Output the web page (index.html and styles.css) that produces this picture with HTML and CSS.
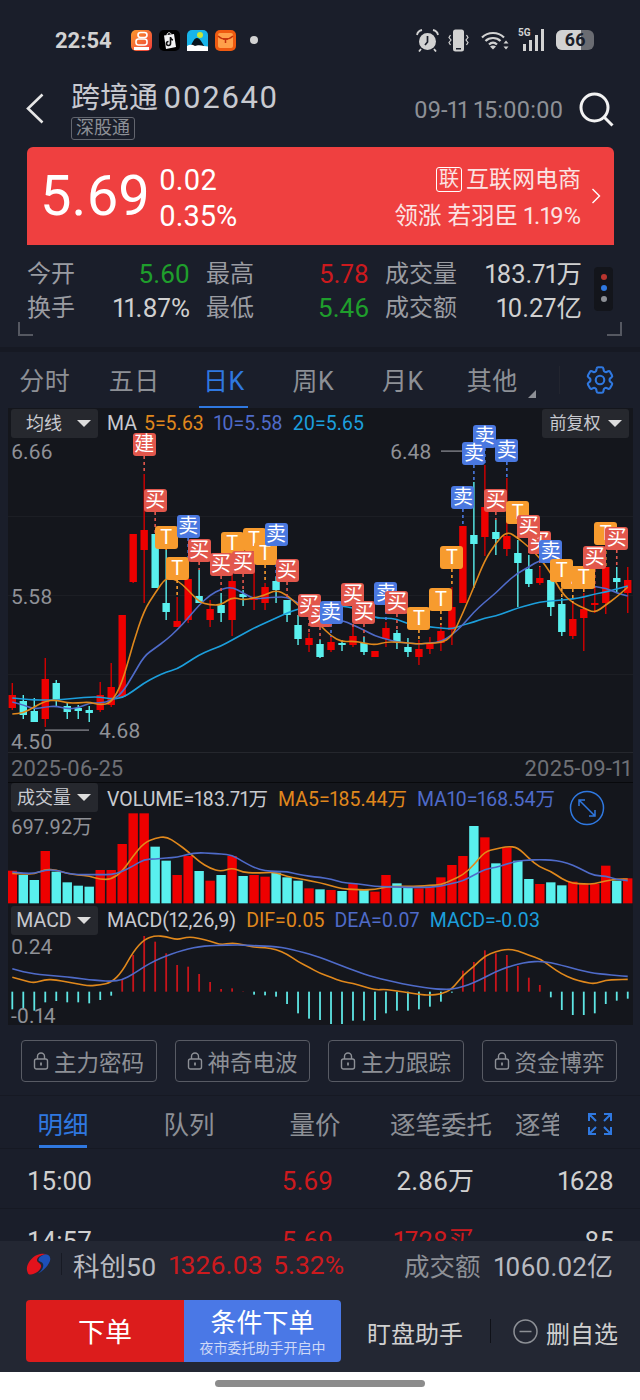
FILE: index.html
```html
<!DOCTYPE html>
<html lang="zh-CN">

  <head>
    <meta charset="UTF-8">
    <meta name="viewport" content="width=device-width, initial-scale=1.0">
    <title>跨境通 002640</title>
    <link rel="stylesheet" href="styles.css">
  </head>

  <body>
    <div class="status">
      <span class="clock">22:54</span>
      <div class="apps">
        <svg class="app" viewBox="0 0 21 21">
          <defs><linearGradient id="appa" x1="0" y1="0" x2="1" y2="1"><stop offset="0" stop-color="#fb9a2c"/><stop offset="1" stop-color="#ee3b3b"/></linearGradient></defs>
          <rect width="21" height="21" rx="5" fill="url(#appa)"/>
          <rect x="7" y="2.5" width="9" height="5" rx="2.5" fill="none" stroke="#fff" stroke-width="1.6"/>
          <rect x="5" y="9" width="11" height="6" rx="2.5" fill="none" stroke="#fff" stroke-width="1.6"/>
          <rect x="3" y="17" width="15" height="3" fill="#fff"/>
        </svg>
        <svg class="app" viewBox="0 0 21 21">
          <rect width="21" height="21" rx="5" fill="#000"/>
          <path d="M5 5.5 15 4 17 17 7 19Z" fill="#f3f3f3"/>
          <path d="M8 5c0-3 4-3 4-.5" fill="none" stroke="#f3f3f3"/>
          <path d="M11.5 7v6.5a2 2 0 1 1-2-2M11.5 7.5c.3 1.5 1.3 2.3 2.5 2.5" fill="none" stroke="#111" stroke-width="1.6"/>
        </svg>
        <svg class="app" viewBox="0 0 21 21">
          <rect width="21" height="21" rx="5" fill="#18b4ea"/>
          <circle cx="13" cy="5" r="3" fill="#c8e53a"/>
          <path d="M3 17C6 12 7 8 10 8c3 0 5 5 8 9Z" fill="#07131c"/>
          <path d="M0 16c3-2 6-1 8 0 2-1 6-1 9 0l4 .5V21H0Z" fill="#fff"/>
        </svg>
        <svg class="app" viewBox="0 0 21 21">
          <rect width="21" height="21" rx="5" fill="#ef5a10"/>
          <rect x="3" y="3" width="15" height="15" rx="2" fill="#ffa04a"/>
          <path d="M3 6c4 4 11 4 15 0" fill="none" stroke="#c5320c" stroke-width="1.3"/>
          <path d="M8 9h5M10.5 9v4" stroke="#c5320c" stroke-width="1.5"/>
        </svg>
      </div>
      <span class="status-dot"></span>
      <div class="sys">
        <svg class="sys-alarm" viewBox="0 0 23 23">
          <circle cx="11.5" cy="12.5" r="8.5" fill="#d2d2d2"/>
          <path d="M11.5 7v6l-2.5 3" fill="none" stroke="#1a1e2a" stroke-width="1.7"/>
          <path d="M1 6c.5-3 2.5-4.5 5-5M22 6c-.5-3-2.5-4.5-5-5M5 20l-2 2.5M18 20l2 2.5" fill="none" stroke="#d2d2d2" stroke-width="1.8"/>
        </svg>
        <svg class="sys-vibrate" viewBox="0 0 21 23">
          <rect x="5" y="0.5" width="11" height="22" rx="2.5" fill="#d2d2d2"/>
          <rect x="8" y="19" width="5" height="1.5" fill="#1a1e2a"/>
          <path d="M2.5 6 1 8.5 3 11 1 13.5l1.5 2.5M18.5 6 20 8.5 18 11l2 2.5L18.5 16" fill="none" stroke="#d2d2d2" stroke-width="1.2"/>
        </svg>
        <svg class="sys-wifi" viewBox="0 0 28 20">
          <path d="M1 7.5c6-6 16-6 22 0M4.5 11c4-4 11-4 15 0M8 14.5c2.5-2.5 5.5-2.5 8 0" fill="none" stroke="#d2d2d2" stroke-width="2.2"/>
          <path d="M12 19.5l-3-3c1.5-1.5 4.5-1.5 6 0Z" fill="#d2d2d2"/>
          <path d="M25 10.5l-2.5 3h5ZM25 19.5l-2.5-3h5Z" fill="#d2d2d2"/>
        </svg>
        <div class="sys-signal">
          <span class="sys-5g">5G</span>
          <span class="sig-bar sig-a"></span>
          <span class="sig-bar sig-b"></span>
          <span class="sig-bar sig-c"></span>
          <span class="sig-bar sig-d"></span>
        </div>
        <div class="battery"><span class="battery-fill"></span><span class="battery-num">66</span></div>
      </div>
    </div>

    <div class="head">
      <svg class="back" viewBox="0 0 18 31"><path d="M16.5 1.5 2 15.5l14.5 14" fill="none" stroke="#e6e6e6" stroke-width="2.6"/></svg>
      <div class="head-title">
        <div class="stock"><span class="stock-name">跨境通</span> <span class="stock-code">002640</span></div>
        <span class="tag">深股通</span>
      </div>
      <span class="head-date">09-11 15:00:00</span>
      <svg class="search" viewBox="0 0 35 35"><circle cx="15.5" cy="15.5" r="13.5" fill="none" stroke="#f2f2f2" stroke-width="3"/><path d="M25 25l8.5 8.5" stroke="#f2f2f2" stroke-width="3"/></svg>
    </div>

    <div class="banner">
      <span class="price">5.69</span>
      <div class="change">
        <span>0.02</span>
        <span>0.35%</span>
      </div>
      <div class="sector">
        <div class="sector-name"><span class="sector-tag">联</span>互联网电商</div>
        <div class="sector-lead">领涨 若羽臣 1.19%</div>
      </div>
      <svg class="banner-arrow" viewBox="0 0 10 16"><path d="M1.5 1 8.5 8l-7 7" fill="none" stroke="#fff" stroke-width="1.4"/></svg>
    </div>

    <div class="stats">
      <div class="stat-row">
        <div class="stat stat-a"><span class="stat-label">今开</span><span class="green">5.60</span></div>
        <div class="stat stat-a"><span class="stat-label">最高</span><span class="red">5.78</span></div>
        <div class="stat stat-b"><span class="stat-label">成交量</span><span>183.71万</span></div>
      </div>
      <div class="stat-row">
        <div class="stat stat-a"><span class="stat-label">换手</span><span>11.87%</span></div>
        <div class="stat stat-a"><span class="stat-label">最低</span><span class="green">5.46</span></div>
        <div class="stat stat-b"><span class="stat-label">成交额</span><span>10.27亿</span></div>
      </div>
      <div class="stat-dots">
        <span class="stat-dot dot-red"></span>
        <span class="stat-dot dot-blue"></span>
        <span class="stat-dot dot-grey"></span>
      </div>
      <span class="corner corner-l"></span>
      <span class="corner corner-r"></span>
    </div>

    <div class="tabs">
      <span class="tab">分时</span>
      <span class="tab">五日</span>
      <span class="tab tab-on">日K</span>
      <span class="tab">周K</span>
      <span class="tab">月K</span>
      <span class="tab tab-more">其他</span>
      <span class="tabs-line"></span>
      <svg class="gear" viewBox="0 0 24 24" fill="none" stroke="#2f78e0" stroke-width="1.5"><path d="M9.594 3.94c.09-.542.56-.94 1.11-.94h2.593c.55 0 1.02.398 1.11.94l.213 1.281c.063.374.313.686.645.87.074.04.147.083.22.127.325.196.72.257 1.075.124l1.217-.456a1.125 1.125 0 011.37.49l1.296 2.247a1.125 1.125 0 01-.26 1.431l-1.003.827c-.293.241-.438.613-.43.992a7.723 7.723 0 010 .255c-.008.378.137.75.43.991l1.004.827c.424.35.534.955.26 1.43l-1.298 2.247a1.125 1.125 0 01-1.369.491l-1.217-.456c-.355-.133-.75-.072-1.076.124a6.57 6.57 0 01-.22.128c-.331.183-.581.495-.644.869l-.213 1.28c-.09.543-.56.941-1.11.941h-2.594c-.55 0-1.02-.398-1.11-.94l-.213-1.281c-.062-.374-.312-.686-.644-.87a6.52 6.52 0 01-.22-.127c-.325-.196-.72-.257-1.076-.124l-1.217.456a1.125 1.125 0 01-1.369-.49l-1.297-2.247a1.125 1.125 0 01.26-1.431l1.004-.827c.292-.24.437-.613.43-.992a6.932 6.932 0 010-.255c.007-.378-.138-.75-.43-.992l-1.004-.827a1.125 1.125 0 01-.26-1.43l1.297-2.247a1.125 1.125 0 011.37-.491l1.216.456c.356.133.751.072 1.076-.124.072-.044.146-.087.22-.128.332-.183.582-.495.644-.869l.214-1.281z"/><circle cx="12" cy="12" r="3"/></svg>
    </div>

    <div class="chart" id="chart">
      <svg class="chart-draw" id="chart-draw" viewBox="8 408 625 617"></svg>

      <div class="panel panel-k">
        <div class="legend">
          <span class="pick">均线</span>
          <span class="legend-ma">MA</span>
          <span class="c-orange">5=5.63</span>
          <span class="c-indigo">10=5.58</span>
          <span class="c-sky">20=5.65</span>
          <span class="pick pick-right">前复权</span>
        </div>
      </div>
      <div class="dates"><span>2025-06-25</span><span>2025-09-11</span></div>
      <div class="panel panel-vol">
        <div class="legend legend-vol">
          <span class="pick">成交量</span>
          <span>VOLUME=183.71万</span>
          <span class="c-orange">MA5=185.44万</span>
          <span class="c-indigo">MA10=168.54万</span>
        </div>
      </div>
      <div class="panel panel-macd">
        <div class="legend">
          <span class="pick pick-en">MACD</span>
          <span>MACD(12,26,9)</span>
          <span class="c-orange">DIF=0.05</span>
          <span class="c-indigo">DEA=0.07</span>
          <span class="c-sky">MACD=-0.03</span>
        </div>
      </div>

      <span class="axis axis-666">6.66</span>
      <span class="axis axis-558">5.58</span>
      <span class="axis axis-450">4.50</span>
      <span class="axis axis-468">4.68</span>
      <span class="axis axis-648">6.48</span>
      <span class="axis axis-vol">697.92万</span>
      <span class="axis axis-024">0.24</span>
      <span class="axis axis-014">-0.14</span>
      <svg class="zoom-btn" viewBox="0 0 36 36" fill="none" stroke="#2f78e0" stroke-width="1.5"><circle cx="18" cy="18" r="16.5"/><path d="M10 10l16 16M10 16v-6h6M26 20v6h-6"/></svg>
    </div>

    <div class="locks">
      <div class="lock-btn"><svg class="lock" viewBox="0 0 16 18"><path d="M4.5 7V4.5a3.5 3.5 0 0 1 7 0V7" fill="none" stroke="#8d9096" stroke-width="1.4"/><rect x="1.5" y="7" width="13" height="10" rx="2" fill="none" stroke="#8d9096" stroke-width="1.4"/><path d="M8 10.5v3" stroke="#8d9096" stroke-width="1.8"/></svg>主力密码</div>
      <div class="lock-btn"><svg class="lock" viewBox="0 0 16 18"><path d="M4.5 7V4.5a3.5 3.5 0 0 1 7 0V7" fill="none" stroke="#8d9096" stroke-width="1.4"/><rect x="1.5" y="7" width="13" height="10" rx="2" fill="none" stroke="#8d9096" stroke-width="1.4"/><path d="M8 10.5v3" stroke="#8d9096" stroke-width="1.8"/></svg>神奇电波</div>
      <div class="lock-btn"><svg class="lock" viewBox="0 0 16 18"><path d="M4.5 7V4.5a3.5 3.5 0 0 1 7 0V7" fill="none" stroke="#8d9096" stroke-width="1.4"/><rect x="1.5" y="7" width="13" height="10" rx="2" fill="none" stroke="#8d9096" stroke-width="1.4"/><path d="M8 10.5v3" stroke="#8d9096" stroke-width="1.8"/></svg>主力跟踪</div>
      <div class="lock-btn"><svg class="lock" viewBox="0 0 16 18"><path d="M4.5 7V4.5a3.5 3.5 0 0 1 7 0V7" fill="none" stroke="#8d9096" stroke-width="1.4"/><rect x="1.5" y="7" width="13" height="10" rx="2" fill="none" stroke="#8d9096" stroke-width="1.4"/><path d="M8 10.5v3" stroke="#8d9096" stroke-width="1.8"/></svg>资金博弈</div>
    </div>

    <div class="detail-tabs">
      <span class="detail-tab detail-on">明细</span>
      <span class="detail-tab">队列</span>
      <span class="detail-tab">量价</span>
      <span class="detail-tab">逐笔委托</span>
      <span class="detail-cut">逐笔成交</span>
      <svg class="detail-expand" viewBox="0 0 26 24" fill="none" stroke="#2f78e0" stroke-width="2"><path d="M2 9V2h7M2 2l7 7M24 9V2h-7M24 2l-7 7M2 15v7h7M2 22l7-7M24 15v7h-7M24 22l-7-7"/></svg>
    </div>

    <div class="trades">
      <div class="trade"><span>15:00</span><span class="red">5.69</span><span>2.86万</span><span>1628</span></div>
      <div class="trade"><span>14:57</span><span class="red">5.69</span><span class="red">1728买</span><span>85</span></div>
    </div>

    <div class="foot">
      <div class="index">
        <svg class="index-logo" viewBox="0 0 25 22">
          <path d="M1.5 19C-1 14 4 5 11 2c4-1.500 8-1.500 10-.5-5-.5-10 2.500-10 5.500 0 3 5 3 4 7-1 4-6 7-10 7.500-2 .3-3-.5-3.500-2.500Z" fill="#e3121c"/>
          <path d="M21 1.500c4 1.500 4 5.500 2 8.500-2 4-6 8-11 10.500 4-2.500 6-6.500 5-9.500-1-3-4.500-2-4.500-4 0-3 4.500-6 8.500-5.500Z" fill="#1d4fb8"/>
        </svg>
        <span class="index-line"></span>
        <span class="index-name">科创50</span>
        <span class="red index-val">1326.03</span>
        <span class="red index-pct">5.32%</span>
        <span class="index-label">成交额</span>
        <span class="index-turn">1060.02亿</span>
      </div>
      <div class="actions">
        <span class="order">下单</span>
        <div class="order-cond">
          <span class="cond-main">条件下单</span>
          <span class="cond-sub">夜市委托助手开启中</span>
        </div>
        <span class="watch">盯盘助手</span>
        <span class="actions-line"></span>
        <svg class="minus" viewBox="0 0 25 25"><circle cx="12.5" cy="12.5" r="11.5" fill="none" stroke="#8d9096" stroke-width="1.5"/><path d="M6.5 12.5h12" stroke="#8d9096" stroke-width="1.5"/></svg>
        <span class="remove">删自选</span>
      </div>
    </div>

    <div class="home"><span class="home-bar"></span></div>

    <script src="script.js"></script>
  </body>

</html>
```

FILE: styles.css
```css
* {
  box-sizing: border-box;
}

html,
body {
  margin: 0;
  height: 1400px;
  overflow: hidden;
}

body {
  width: 640px;
  background-color: #1a1e2a;
  color: #d0d0d0;
  font-family: Roboto, "Noto Sans CJK SC", sans-serif;
  font-size: 25px;
  font-variant-numeric: proportional-nums;
}

.red {
  color: #cc1a1e;
}

.green {
  color: #1f9e2c;
}

.status {
  height: 80px;
  display: flex;
  align-items: center;
  padding-left: 55px;
  color: #d2d2d2;
}

.clock {
  width: 76px;
  font-size: 22px;
  font-weight: 700;
}

.apps {
  display: flex;
  gap: 7px;
}

.app {
  width: 21px;
  height: 21px;
}

.status-dot {
  width: 8px;
  height: 8px;
  margin-left: 14px;
  border-radius: 50%;
  background-color: #d2d2d2;
}

.sys {
  display: flex;
  align-items: center;
  margin-left: 158px;
}

.sys-alarm {
  width: 23px;
  height: 23px;
}

.sys-vibrate {
  width: 21px;
  height: 23px;
  margin-left: 9px;
}

.sys-wifi {
  width: 28px;
  height: 20px;
  margin-left: 12px;
}

.sys-signal {
  position: relative;
  width: 28px;
  height: 22px;
  margin-left: 9px;
}

.sys-5g {
  position: absolute;
  left: 0;
  top: -2px;
  font-size: 10px;
  font-weight: 700;
}

.sig-bar {
  position: absolute;
  bottom: 0;
  width: 3px;
  background-color: #d2d2d2;
}

.sig-a {
  left: 5px;
  height: 7px;
}

.sig-b {
  left: 11px;
  height: 11px;
}

.sig-c {
  left: 17px;
  height: 16px;
}

.sig-d {
  left: 23px;
  height: 22px;
}

.battery {
  position: relative;
  width: 38px;
  height: 20px;
  margin-left: 10px;
  border-radius: 6px;
  background-color: #6a6c72;
  overflow: hidden;
  color: #1a1e2a;
  font-size: 18px;
  font-weight: 700;
  line-height: 20px;
  text-align: center;
}

.battery-fill {
  position: absolute;
  left: 0;
  top: 0;
  width: 25px;
  height: 20px;
  background-color: #d2d2d2;
}

.battery-num {
  position: relative;
}

.head {
  height: 67px;
  display: flex;
  padding-left: 26px;
}

.back {
  width: 18px;
  height: 31px;
  margin-top: 13px;
}

.head-title {
  width: 300px;
  margin-left: 27px;
}

.stock {
  height: 37px;
  color: #c8cad0;
  font-size: 29px;
  line-height: 36px;
  white-space: nowrap;
}

.stock-code {
  font-size: 31px;
  letter-spacing: 1.5px;
  margin-left: -2px;
}

.tag {
  display: block;
  width: 64px;
  height: 23px;
  border: 1px solid #62656e;
  border-radius: 3px;
  color: #8d9096;
  font-size: 18px;
  line-height: 20px;
  text-align: center;
}

.head-date {
  width: 148px;
  margin-top: 17px;
  margin-left: 43px;
  color: #8d9096;
  font-size: 23.5px;
  line-height: 26px;
  white-space: nowrap;
}

.search {
  width: 35px;
  height: 35px;
  margin-top: 12px;
  margin-left: 17px;
}

.banner {
  width: 587px;
  height: 98px;
  margin-left: 27px;
  padding-left: 13px;
  display: flex;
  align-items: center;
  border-radius: 6px 6px 0 0;
  background-color: #ef4040;
  color: #fff;
}

.price {
  width: 119px;
  font-size: 56px;
}

.change {
  display: flex;
  flex-direction: column;
  width: 200px;
  margin-top: 3px;
  font-size: 29px;
  line-height: 36px;
}

.sector {
  flex: 1;
  display: flex;
  flex-direction: column;
  align-items: flex-end;
  margin-top: 3px;
  font-size: 23px;
  line-height: 36px;
  color: #fbe3e3;
}

.sector-name {
  display: flex;
  align-items: center;
}

.sector-tag {
  width: 26px;
  height: 25px;
  margin-right: 4px;
  border: 1px solid #fff;
  border-radius: 3px;
  font-size: 20px;
  line-height: 22px;
  text-align: center;
}

.sector-lead {
  font-size: 23.5px;
}

.banner-arrow {
  width: 10px;
  height: 16px;
  margin: 0 13px 0 10px;
}

.stats {
  position: relative;
  height: 102px;
  padding: 12px 0 0 27px;
  font-size: 26px;
}

.stat-row {
  display: flex;
  gap: 16px;
  height: 34px;
  line-height: 34px;
}

.stat {
  display: flex;
  justify-content: space-between;
}

.stat-a {
  width: 163px;
}

.stat-b {
  width: 197px;
  font-size: 25.5px;
}

.stat-label {
  color: #9a9ca2;
  font-size: 24px;
}

.stat-dots {
  position: absolute;
  left: 594px;
  top: 22px;
  width: 19px;
  height: 44px;
  padding: 7px 0;
  display: flex;
  flex-direction: column;
  align-items: center;
  gap: 5px;
  border-radius: 4px;
  background-color: #13151b;
}

.stat-dot {
  width: 6px;
  height: 6px;
  border-radius: 50%;
}

.dot-red {
  background-color: #b8352f;
}

.dot-blue {
  background-color: #2f78e0;
}

.dot-grey {
  background-color: #8d9096;
}

.corner {
  position: absolute;
  top: 77px;
  width: 15px;
  height: 14px;
  border-bottom: 2px solid #555861;
}

.corner-l {
  left: 18px;
  border-left: 2px solid #555861;
}

.corner-r {
  left: 607px;
  border-right: 2px solid #555861;
}

.tabs {
  position: relative;
  height: 61px;
  display: flex;
  border-top: 5px solid #161923;
}

.tab {
  position: relative;
  width: 89.5px;
  height: 56px;
  color: #8d9096;
  line-height: 60px;
  letter-spacing: 0.5px;
  text-align: center;
}

.tab-on {
  color: #2f78e0;
}

.tab-on:after {
  content: "";
  position: absolute;
  left: 20px;
  bottom: 0;
  width: 49px;
  height: 2px;
  background-color: #2f78e0;
}

.tab-more:after {
  content: "";
  position: absolute;
  right: 1px;
  bottom: 10px;
  border-left: 8px solid transparent;
  border-bottom: 8px solid #8d9096;
}

.tabs-line {
  position: absolute;
  left: 559px;
  top: 14px;
  width: 1px;
  height: 28px;
  background-color: #22252f;
}

.gear {
  position: absolute;
  left: 583px;
  top: 11px;
  width: 34px;
  height: 34px;
}

.chart {
  position: relative;
  width: 625px;
  height: 617px;
  margin-left: 8px;
  background-color: #14161c;
  font-size: 19.5px;
  overflow: hidden;
}

.chart-draw {
  position: absolute;
  left: 0;
  top: 0;
  width: 625px;
  height: 617px;
}

.panel {
  position: relative;
}

.panel-k {
  height: 345px;
  border-bottom: 1px solid #25272d;
}

.panel-vol {
  height: 123px;
  border-top: 1px solid #08090c;
}

.panel-macd {
  height: 120px;
}

.legend {
  display: flex;
  align-items: center;
  gap: 10px;
  height: 30px;
  padding-left: 3px;
  color: #c8cad0;
  white-space: nowrap;
}

.legend-vol {
  height: 28px;
}

.legend-ma {
  margin-right: -3px;
}

.pick {
  position: relative;
  flex-shrink: 0;
  width: 87px;
  height: 29px;
  margin-right: -1px;
  padding-right: 21px;
  border-radius: 3px;
  background-color: #26282e;
  font-size: 18px;
  line-height: 29px;
  text-align: center;
}

.pick:after {
  content: "";
  position: absolute;
  right: 7px;
  top: 11px;
  border-left: 7px solid transparent;
  border-right: 7px solid transparent;
  border-top: 7px solid #ddd;
}

.pick-en {
  font-size: 19.5px;
}

.pick-right {
  position: absolute;
  left: 534px;
  top: 1px;
  margin: 0;
  font-size: 17px;
}

.c-orange {
  color: #e0881c;
}

.c-indigo {
  color: #4f6bc9;
}

.c-sky {
  color: #1c9fdc;
}

.dates {
  height: 29px;
  display: flex;
  justify-content: space-between;
  padding: 0 2px 0 3px;
  color: #6e7076;
  font-size: 22px;
  line-height: 31px;
}

.axis {
  position: absolute;
  color: #8f9197;
  font-size: 21px;
  line-height: 18px;
  white-space: nowrap;
}

.axis-666 {
  left: 3px;
  top: 35px;
}

.axis-558 {
  left: 3px;
  top: 180px;
}

.axis-450 {
  left: 3px;
  top: 325px;
}

.axis-468 {
  left: 91px;
  top: 314px;
}

.axis-648 {
  left: 382px;
  top: 35px;
}

.axis-vol {
  left: 3px;
  top: 410px;
  font-size: 20px;
}

.axis-024 {
  left: 3px;
  top: 530px;
}

.axis-014 {
  left: 3px;
  top: 599px;
}

.zoom-btn {
  position: absolute;
  left: 561px;
  top: 382px;
  width: 36px;
  height: 36px;
}

.mark {
  position: absolute;
  width: 23px;
  height: 23px;
  border-radius: 3px;
  color: #fff;
  font-size: 20px;
  line-height: 22px;
  text-align: center;
}

.mark-buy {
  background-color: #e2574c;
}

.mark-sell {
  background-color: #4a78e0;
}

.mark-t {
  background-color: #f79b2e;
}

.locks {
  height: 71px;
  padding: 15px 0 0 21px;
  display: flex;
  gap: 18px;
  border-bottom: 1px solid #161923;
}

.lock-btn {
  display: flex;
  align-items: center;
  width: 135.5px;
  height: 42px;
  padding-left: 11px;
  border: 1px solid #585b64;
  border-radius: 4px;
  color: #8d9096;
  font-size: 22.5px;
}

.lock {
  width: 16px;
  height: 18px;
  margin-right: 5px;
}

.detail-tabs {
  position: relative;
  height: 53px;
  display: flex;
  border-bottom: 1px solid #161923;
  color: #8d9096;
  font-size: 25.5px;
}

.detail-tab {
  position: relative;
  width: 126px;
  height: 52px;
  line-height: 58px;
  text-align: center;
  white-space: nowrap;
}

.detail-on {
  color: #2f78e0;
}

.detail-on:after {
  content: "";
  position: absolute;
  left: 39px;
  bottom: 0;
  width: 48px;
  height: 3px;
  background-color: #2f78e0;
}

.detail-cut {
  width: 44px;
  margin-left: 11px;
  overflow: hidden;
  line-height: 58px;
  white-space: nowrap;
}

.detail-expand {
  position: absolute;
  left: 587px;
  top: 16px;
  width: 26px;
  height: 24px;
}

.trades {
  height: 92px;
  overflow: hidden;
}

.trade {
  height: 60px;
  padding-left: 27px;
  display: grid;
  grid-template-columns: 100px 206px 141px 140px;
  border-bottom: 1px solid #161923;
  font-size: 26px;
  line-height: 64px;
  text-align: right;
}

.trade span:first-child {
  font-variant-numeric: tabular-nums;
  text-align: left;
}

.foot {
  height: 131px;
  background-color: #232733;
}

.index {
  height: 59px;
  padding: 0 0 13px 26px;
  display: flex;
  align-items: center;
  color: #b9bbc1;
  font-size: 26.5px;
}

.index-logo {
  width: 25px;
  height: 22px;
}

.index-line {
  width: 1px;
  height: 22px;
  margin: 0 11px 0 10px;
  background-color: #171a24;
}

.index-name {
  width: 96px;
}

.index-val {
  width: 104px;
}

.index-pct {
  width: 131px;
}

.index-label {
  width: 90px;
  color: #8d9096;
  font-size: 25.5px;
}

.index-turn {
  font-size: 26px;
}

.actions {
  display: flex;
  align-items: center;
  height: 62px;
  padding-left: 26px;
}

.order {
  width: 158px;
  height: 62px;
  border-radius: 4px 0 0 4px;
  background-color: #dc1c1c;
  color: #fff;
  font-size: 27px;
  line-height: 66px;
  text-align: center;
}

.order-cond {
  width: 157px;
  height: 62px;
  display: flex;
  flex-direction: column;
  align-items: center;
  border-radius: 0 4px 4px 0;
  background-color: #4a78e6;
  color: #fff;
}

.cond-main {
  margin-bottom: -5px;
  font-size: 26px;
  line-height: 46px;
}

.cond-sub {
  color: #cfd9f7;
  font-size: 14px;
  line-height: 14px;
}

.watch {
  margin-left: 26px;
  padding-top: 2px;
  font-size: 24px;
  white-space: nowrap;
}

.actions-line {
  width: 1px;
  height: 24px;
  margin: 0 22px 0 27px;
  background-color: #0f1118;
}

.minus {
  width: 25px;
  height: 25px;
  margin-right: 8px;
}

.remove {
  padding-top: 2px;
  font-size: 24px;
  white-space: nowrap;
}

.home {
  height: 28px;
  padding-top: 8px;
  background-color: #fff;
}

.home-bar {
  display: block;
  width: 210px;
  height: 7px;
  margin-left: 215px;
  border-radius: 4px;
  background-color: #8c8c8c;
}
```

FILE: script.js
```js
const RED = '#ee0000';
const CYAN = '#59f0ee';

// colour, body top, body bottom, wick top, wick bottom (page y)
const candles = [
  ['r', 695, 708, 683, 710], ['c', 701, 715, 695, 719], ['c', 711, 722, 698, 722], ['r', 679, 719, 658, 727],
  ['c', 683, 700, 680, 707], ['c', 706, 712, 703, 719], ['c', 708, 711, 705, 719], ['c', 710, 713, 706, 722],
  ['r', 695, 710, 682, 712], ['r', 687, 705, 663, 707], ['r', 615, 697, 615, 697], ['r', 534, 582, 534, 583],
  ['r', 530, 550, 474, 603], ['c', 534, 588, 534, 588], ['c', 603, 612, 550, 620], ['r', 621, 627, 597, 627],
  ['r', 579, 620, 579, 623], ['c', 596, 603, 570, 603], ['r', 609, 620, 600, 627], ['c', 605, 613, 593, 622],
  ['r', 581, 620, 570, 636], ['c', 594, 597, 590, 606], ['r', 598, 600, 570, 610], ['r', 587, 603, 583, 610],
  ['c', 581, 590, 577, 603], ['c', 600, 615, 600, 622], ['c', 625, 639, 615, 645], ['r', 638, 645, 633, 652],
  ['c', 644, 657, 640, 658], ['r', 642, 650, 637, 652], ['c', 643, 645, 640, 651], ['r', 636, 645, 627, 647],
  ['c', 643, 652, 637, 655], ['r', 651, 657, 651, 657], ['r', 628, 639, 622, 647], ['c', 633, 642, 630, 649],
  ['c', 647, 652, 638, 657], ['r', 649, 657, 640, 665], ['r', 643, 649, 637, 654], ['r', 631, 643, 625, 651],
  ['r', 607, 630, 587, 645], ['r', 526, 603, 526, 603], ['c', 535, 544, 482, 588], ['r', 507, 537, 465, 556],
  ['c', 532, 539, 520, 555], ['r', 536, 549, 478, 556], ['c', 553, 563, 540, 607], ['c', 569, 584, 555, 587],
  ['r', 578, 583, 567, 585], ['c', 580, 607, 577, 616], ['c', 604, 632, 598, 636], ['r', 619, 636, 603, 639],
  ['r', 609, 618, 593, 651], ['r', 603, 605, 588, 613], ['r', 567, 603, 567, 614], ['c', 578, 582, 567, 592],
  ['r', 580, 593, 567, 613]
];

const ma5 = [714, 713, 707, 701, 700, 703, 703, 702, 705, 703, 683, 643, 610, 593, 577, 580, 590, 602, 605, 605, 597, 600, 598, 595, 590, 595, 605, 615, 625, 636, 642, 641, 643, 645, 642, 642, 643, 644, 643, 643, 637, 613, 587, 560, 543, 531, 538, 547, 558, 573, 593, 603, 608, 613, 605, 597, 587];
const ma10 = [702, 705, 709, 707, 706, 709, 708, 703, 703, 701, 693, 675, 656, 648, 640, 630, 618, 605, 595, 589, 587, 593, 599, 598, 597, 597, 603, 610, 617, 622, 620, 625, 630, 636, 639, 642, 643, 644, 643, 642, 635, 625, 612, 602, 593, 582, 573, 567, 560, 561, 565, 573, 582, 587, 588, 593, 596];
const ma20 = [698, 699, 700, 700, 700, 699, 698, 697, 697, 699, 698, 691, 683, 677, 672, 669, 662, 655, 650, 646, 640, 634, 628, 623, 618, 613, 609, 607, 607, 606, 606, 608, 610, 618, 618, 619, 624, 625, 627, 628, 629, 625, 622, 618, 616, 612, 608, 605, 602, 601, 600, 599, 597, 594, 592, 589, 586];

// values below read from zoomed crops, panel y * 3 from y=770
const volTop = [302, 315, 330, 243, 305, 337, 347, 350, 300, 300, 222, 130, 130, 230, 272, 315, 258, 303, 332, 315, 258, 318, 315, 320, 308, 322, 332, 355, 358, 360, 363, 342, 358, 365, 315, 340, 350, 355, 352, 322, 285, 258, 168, 202, 280, 232, 272, 327, 342, 337, 346, 335, 342, 342, 287, 332, 325];
const volMa5 = [310, 312, 312, 298, 300, 310, 315, 318, 328, 328, 305, 258, 218, 205, 199, 220, 245, 275, 295, 305, 293, 307, 309, 308, 307, 320, 325, 332, 338, 347, 357, 358, 360, 358, 351, 349, 349, 349, 346, 345, 330, 315, 285, 245, 237, 229, 232, 265, 292, 303, 327, 340, 342, 342, 332, 328, 327];
const volMa10 = [306, 310, 310, 300, 300, 310, 314, 314, 314, 314, 305, 288, 268, 267, 264, 262, 252, 248, 250, 252, 255, 275, 293, 302, 305, 305, 313, 319, 322, 327, 338, 340, 344, 349, 350, 351, 352, 352, 352, 348, 340, 333, 315, 298, 292, 282, 273, 270, 269, 270, 275, 285, 302, 317, 318, 328, 332];

const macdBars = [718, 718, 722, 697, 693, 697, 697, 700, 690, 677, 630, 555, 498, 515, 550, 585, 590, 612, 636, 657, 655, 664, 674, 676, 680, 702, 730, 746, 750, 762, 762, 752, 752, 750, 730, 722, 722, 718, 710, 695, 668, 602, 576, 541, 550, 555, 588, 623, 645, 682, 720, 735, 735, 730, 702, 692, 686];
const dif = [622, 630, 640, 628, 630, 636, 642, 648, 644, 638, 605, 545, 508, 497, 500, 510, 500, 505, 513, 525, 518, 524, 532, 533, 538, 552, 575, 592, 610, 622, 635, 640, 650, 660, 658, 663, 668, 673, 676, 672, 658, 615, 590, 557, 545, 537, 542, 556, 566, 590, 612, 627, 636, 642, 630, 629, 628];
const dea = [596, 605, 612, 615, 618, 621, 625, 629, 632, 634, 630, 612, 590, 572, 558, 546, 537, 530, 527, 526, 525, 525, 527, 528, 530, 535, 543, 552, 562, 575, 588, 600, 612, 622, 630, 638, 645, 650, 655, 658, 658, 650, 638, 622, 605, 592, 582, 576, 574, 578, 586, 595, 603, 610, 613, 617, 619];

// candle index, marker centre y, kind. Later entries sit on top.
const marks = [
  [12, 444, '建'], [13, 500, '买'], [14, 537, 'T'], [16, 526, '卖'], [15, 568, 'T'], [17, 550, '买'],
  [20, 543, 'T'], [22, 539, 'T'], [19, 564, '买'], [21, 562, '买'], [23, 553, 'T'], [24, 534, '卖'],
  [25, 570, '买'], [27, 605, '买'], [28, 615, '买'], [29, 612, '卖'], [31, 594, '买'], [32, 612, '买'],
  [34, 593, '卖'], [35, 602, '买'], [37, 618, 'T'], [39, 599, 'T'], [40, 557, 'T'], [41, 497, '卖'],
  [43, 436, '卖'], [42, 453, '卖'], [45, 450, '卖'], [44, 500, '买'], [46, 512, 'T'], [48, 542, '买'],
  [47, 526, '买'], [49, 551, '卖'], [51, 577, 'T'], [50, 570, 'T'], [52, 577, 'T'], [53, 557, '买'],
  [54, 533, 'T'], [55, 538, '买']
];

const kindClass = { '建': 'mark-buy', '买': 'mark-buy', '卖': 'mark-sell', 'T': 'mark-t' };
const kindColor = { '建': '#e2574c', '买': '#e2574c', '卖': '#4a78e0', 'T': '#f79b2e' };

const draw = document.getElementById('chart-draw');
const chart = document.getElementById('chart');
const xAt = i => 12.3 + 10.99 * i;
const volY = z => 770 + z / 3;
let out = '';

function rect(x, y, w, h, fill) {
  out += `<rect x="${x}" y="${y}" width="${w}" height="${h}" fill="${fill}"/>`;
}

function stroke(d, color, width, extra = '') {
  out += `<path d="${d}" fill="none" stroke="${color}" stroke-width="${width}" ${extra}/>`;
}

// smooths a series through midpoints, the app's lines are slightly rounded
function smooth(ys, color) {
  let d = `M${xAt(0)} ${ys[0]}`;
  for (let i = 1; i < ys.length; i++) {
    const mx = (xAt(i - 1) + xAt(i)) / 2;
    const my = (ys[i - 1] + ys[i]) / 2;
    d += ` Q${xAt(i - 1)} ${ys[i - 1]} ${mx} ${my}`;
  }
  d += ` L${xAt(ys.length - 1)} ${ys[ys.length - 1]}`;
  stroke(d, color, 1.6, 'stroke-linejoin="round"');
}

[516, 595, 674].forEach(y => rect(8, y, 625, 1, '#1c1e24'));
rect(45, 729.5, 44, 1.2, '#8f9197');
rect(441, 450.5, 23, 1.2, '#8f9197');

candles.forEach((c, i) => {
  const color = c[0] === 'r' ? RED : CYAN;
  const x = xAt(i);
  rect(x - 0.7, c[3], 1.4, c[4] - c[3], c[0] === 'r' ? '#d40000' : CYAN);
  rect(x - 3.7, c[1], 7.4, c[2] - c[1], color);
});
smooth(ma20, '#1c9fdc');
smooth(ma10, '#4f6bc9');
smooth(ma5, '#e0881c');

marks.forEach(m => {
  const top = m[1] + 12;
  const end = candles[m[0]][3];
  if (end > top) {
    stroke(`M${xAt(m[0])} ${top} V${end}`, kindColor[m[2]], 1.6, 'stroke-dasharray="3 3"');
  }
});

volTop.forEach((z, i) => {
  rect(xAt(i) - 4.7, volY(z), 9.4, volY(400) - volY(z), candles[i][0] === 'r' ? RED : CYAN);
});
smooth(volMa5.map(volY), '#e0881c');
smooth(volMa10.map(volY), '#4f6bc9');

macdBars.forEach((z, i) => {
  const y = volY(z);
  const base = volY(665);
  rect(xAt(i) - 0.9, Math.min(y, base), 1.8, Math.abs(y - base), y < base ? '#c8141a' : '#5ee6e4');
});
smooth(dif.map(volY), '#e0881c');
smooth(dea.map(volY), '#4f6bc9');

draw.innerHTML = out;

marks.forEach(m => {
  const el = document.createElement('div');
  el.className = 'mark ' + kindClass[m[2]];
  el.textContent = m[2];
  el.style.left = (xAt(m[0]) - 8 - 11.5) + 'px';
  el.style.top = (m[1] - 408 - 11.5) + 'px';
  chart.appendChild(el);
});
```
